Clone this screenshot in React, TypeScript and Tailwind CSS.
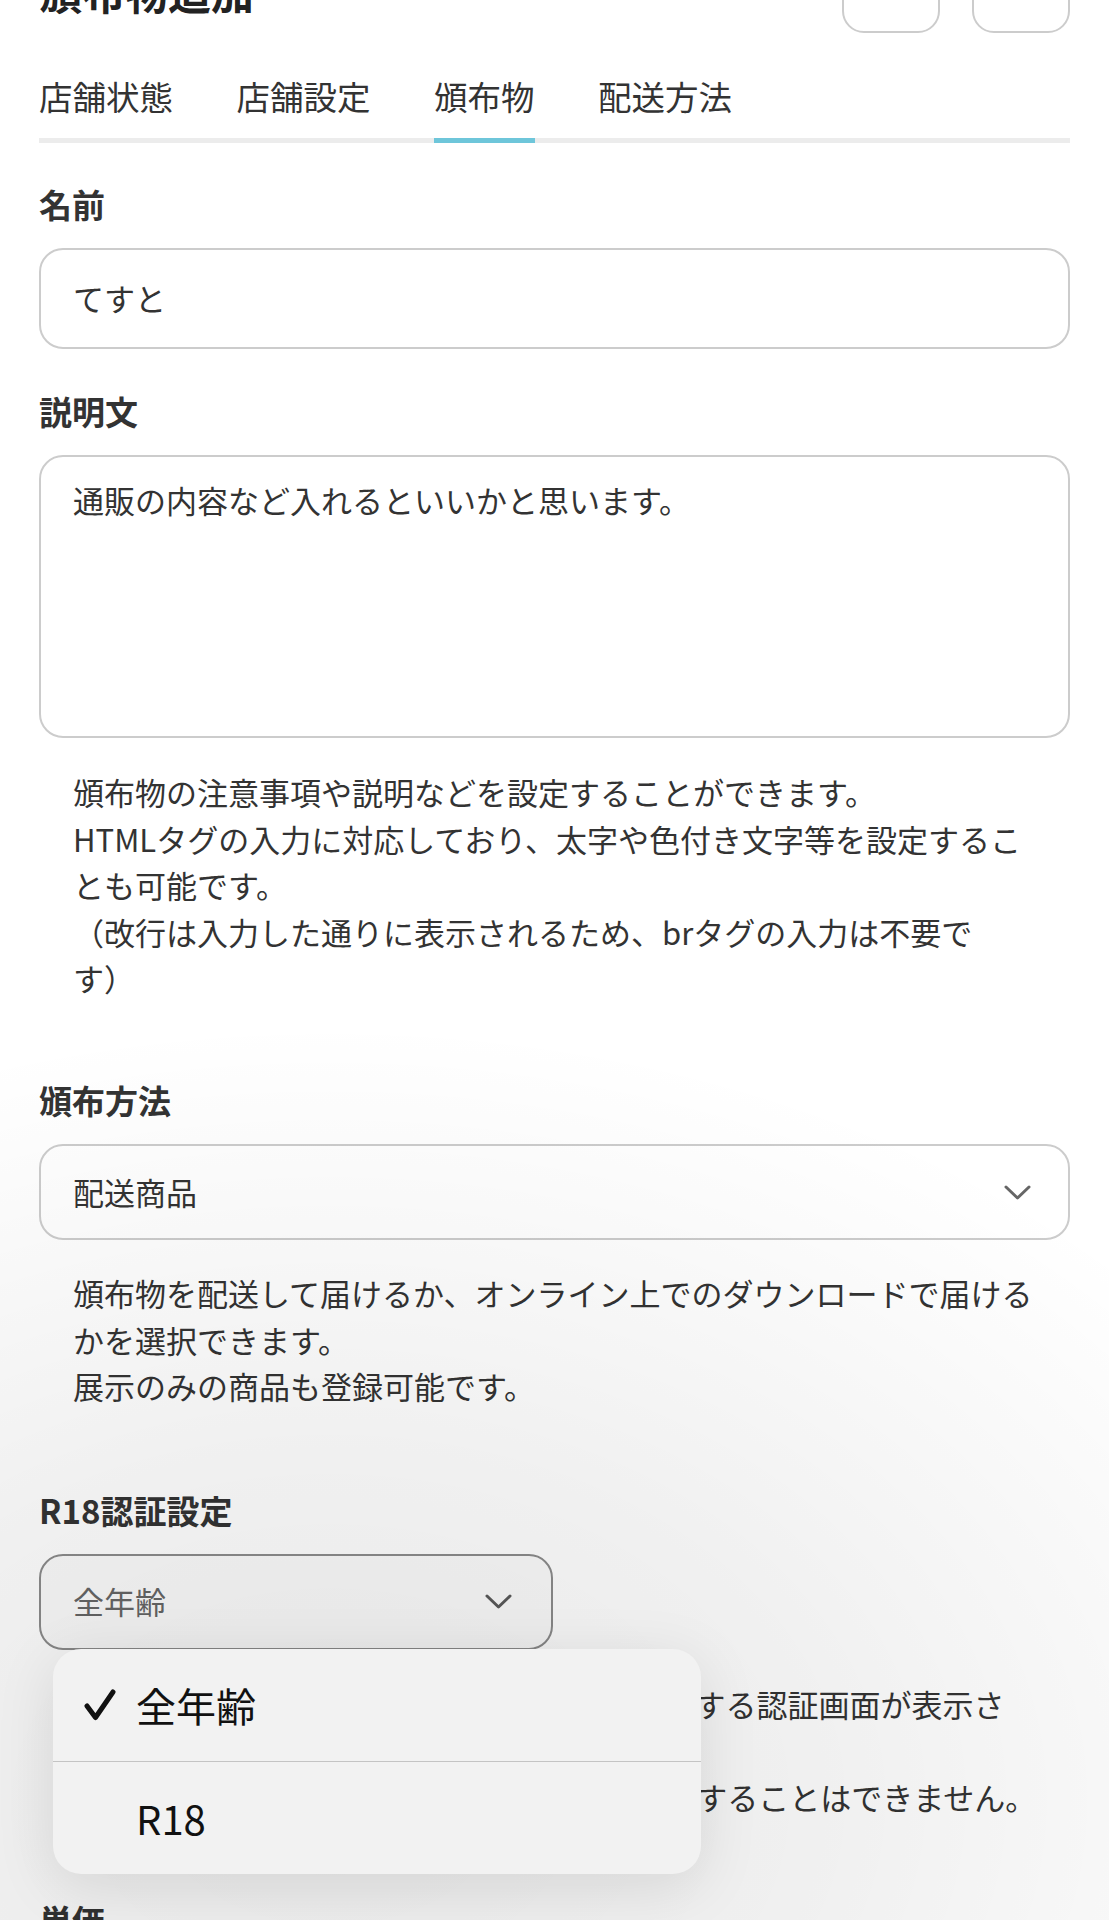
import React from "react";

function Chevron({ color = "#666666" }: { color?: string }) {
  return (
    <svg width="27" height="15" viewBox="0 0 27 15" fill="none">
      <path d="M2 2 L13.5 13 L25 2" stroke={color} strokeWidth="3" strokeLinecap="round" strokeLinejoin="round" />
    </svg>
  );
}

function Check() {
  return (
    <svg width="34" height="32" viewBox="0 0 34 32" fill="none">
      <path d="M4 17 L12.5 28.5 L30 3" stroke="#111111" strokeWidth="5" strokeLinecap="round" strokeLinejoin="round" />
    </svg>
  );
}

const tabs = ["店舗状態", "店舗設定", "頒布物", "配送方法"];

export default function App() {
  return (
    <div className="relative w-[1109px] h-[1920px] overflow-hidden bg-white font-['Noto_Sans_CJK_JP','Noto_Sans',sans-serif] text-[#333333]">
      <div className="px-[39px]">
        {/* header */}
        <div className="-mt-[30px] flex items-start justify-between">
          <h1 className="text-[43px] leading-[43px] font-bold text-[#222222]">頒布物追加</h1>
          <div className="flex gap-[32px]">
            <div className="w-[98px] h-[63px] rounded-[22px] border-2 border-[#cccccc]" />
            <div className="w-[98px] h-[63px] rounded-[22px] border-2 border-[#cccccc]" />
          </div>
        </div>

        {/* tabs */}
        <div className="mt-[45.5px] flex gap-[63.5px] border-b-[5px] border-[#ececec]">
          {tabs.map((t) => (
            <div
              key={t}
              className={
                t === "頒布物"
                  ? "-mb-[5px] border-b-[5px] border-[#6ec6da] pb-[26.5px]"
                  : "pb-[26.5px]"
              }
            >
              <div className="text-[33.5px] leading-[33px] text-[#333333]">{t}</div>
            </div>
          ))}
        </div>

        {/* 名前 */}
        <div className="mt-[44.5px] text-[33px] leading-[33px] font-bold text-[#333333]">名前</div>
        <div className="mt-[27.5px] h-[101px] rounded-[24px] border-2 border-[#cccccc] flex items-center pl-[32px] text-[31px] text-[#333333]">
          てすと
        </div>

        {/* 説明文 */}
        <div className="mt-[45.5px] text-[33px] leading-[33px] font-bold text-[#333333]">説明文</div>
        <div className="mt-[27.5px] h-[283px] rounded-[24px] border-2 border-[#cccccc] pt-[21px] pl-[32px] text-[31px] leading-[44px] text-[#333333]">
          通販の内容など入れるといいかと思います。
        </div>
        <p className="mt-[31px] pl-[34px] text-[31px] leading-[46.5px] whitespace-nowrap text-[#333333]">
          頒布物の注意事項や説明などを設定することができます。
          <br />
          HTMLタグの入力に対応しており、太字や色付き文字等を設定するこ
          <br />
          とも可能です。
          <br />
          （改行は入力した通りに表示されるため、brタグの入力は不要で
          <br />
          す）
        </p>

        {/* 頒布方法 */}
        <div className="mt-[82px] text-[33px] leading-[33px] font-bold text-[#333333]">頒布方法</div>
        <div className="mt-[27.5px] h-[96px] rounded-[24px] border-2 border-[#cccccc] flex items-center justify-between pl-[32px] pr-[37px] text-[31px] text-[#333333]">
          <span>配送商品</span>
          <Chevron />
        </div>
        <p className="mt-[30px] pl-[34px] text-[31px] leading-[46.5px] whitespace-nowrap text-[#333333]">
          頒布物を配送して届けるか、オンライン上でのダウンロードで届ける
          <br />
          かを選択できます。
          <br />
          展示のみの商品も登録可能です。
        </p>

        {/* R18認証設定 */}
        <div className="mt-[84px] text-[33px] leading-[33px] font-bold text-[#333333]">R18認証設定</div>
        <div className="mt-[27px] w-[514px] h-[96px] rounded-[24px] border-2 border-[#8c8c8c] bg-[#fbfbfb] flex items-center justify-between pl-[32px] pr-[39px] text-[31px] text-[#666666]">
          <span>全年齢</span>
          <Chevron color="#5a5a5a" />
        </div>
        <p className="mt-[31px] pl-[34px] text-[31px] leading-[46.5px] whitespace-nowrap text-[#333333]">
          <span className="tracking-[-0.9px]">R18に設定すると、ページ閲覧前に年齢を確認</span>する認証画面が表示さ
          <br />
          れます。
          <br />
          <span className="tracking-[-0.9px]">R18に設定した頒布物を、後から全年齢に変更</span>することはできません。
        </p>

        {/* 単価 */}
        <div className="mt-[84px] text-[33px] leading-[33px] font-bold text-[#333333]">単価</div>
      </div>

      {/* dim backdrop */}
      <div className="pointer-events-none absolute inset-0 z-10 bg-[radial-gradient(ellipse_1100px_780px_at_330px_1800px,rgba(0,0,0,0.085)_0%,rgba(0,0,0,0.06)_45%,rgba(0,0,0,0)_100%)]" />

      {/* dropdown menu */}
      <div className="absolute left-[53px] top-[1649px] z-20 w-[648px] rounded-[28px] bg-[#f2f2f2] shadow-[0_12px_60px_rgba(0,0,0,0.10)] overflow-hidden">
        <div className="h-[112px] flex items-center pl-[30px]">
          <Check />
          <span className="ml-[19px] text-[40px] leading-[40px] text-[#111111]">全年齢</span>
        </div>
        <div className="h-px bg-[#c4c4c4]" />
        <div className="h-[112px] flex items-center pl-[83px]">
          <span className="text-[40px] leading-[40px] text-[#111111]">R18</span>
        </div>
      </div>
    </div>
  );
}
